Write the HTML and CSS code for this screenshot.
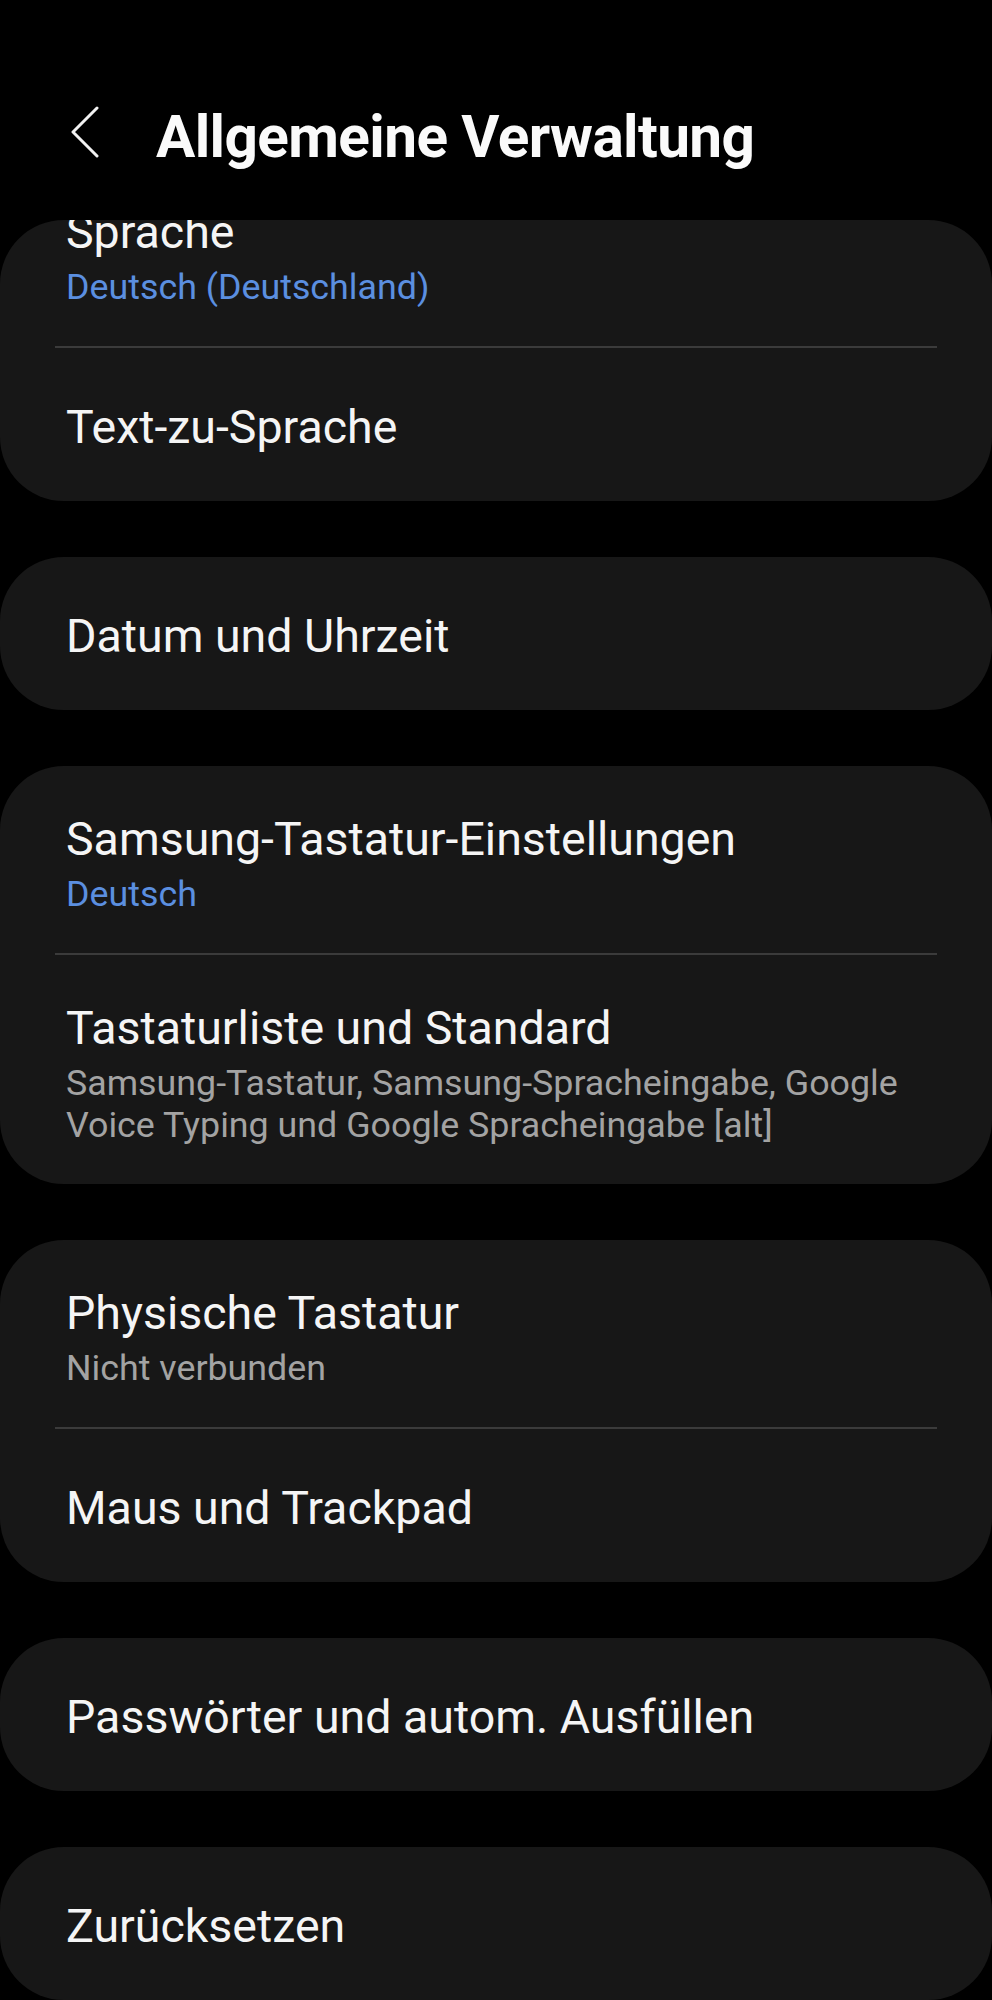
FILE: index.html
```html
<!DOCTYPE html>
<html lang="de">
<head>
<meta charset="utf-8">
<title>Allgemeine Verwaltung</title>
<link rel="stylesheet" href="styles.css">
</head>
<body>
<header class="appbar">
  <svg class="back" width="30" height="52" viewBox="0 0 30 52" aria-hidden="true">
    <path d="M27 2 L3 26 L27 50" fill="none" stroke="#f2f2f2" stroke-width="3" stroke-linecap="round" stroke-linejoin="round"/>
  </svg>
  <h1 class="title">Allgemeine Verwaltung</h1>
</header>
<main class="list">
  <section class="card">
    <div class="row two scrolled">
      <div class="row-title">Sprache</div>
      <div class="row-sub blue">Deutsch (Deutschland)</div>
    </div>
    <div class="divider"></div>
    <div class="row one">
      <div class="row-title">Text-zu-Sprache</div>
    </div>
  </section>
  <section class="card">
    <div class="row one">
      <div class="row-title">Datum und Uhrzeit</div>
    </div>
  </section>
  <section class="card">
    <div class="row two">
      <div class="row-title">Samsung-Tastatur-Einstellungen</div>
      <div class="row-sub blue">Deutsch</div>
    </div>
    <div class="divider"></div>
    <div class="row two">
      <div class="row-title">Tastaturliste und Standard</div>
      <div class="row-sub gray">Samsung-Tastatur, Samsung-Spracheingabe, Google Voice Typing und Google Spracheingabe [alt]</div>
    </div>
  </section>
  <section class="card">
    <div class="row two">
      <div class="row-title">Physische Tastatur</div>
      <div class="row-sub gray">Nicht verbunden</div>
    </div>
    <div class="divider"></div>
    <div class="row one">
      <div class="row-title">Maus und Trackpad</div>
    </div>
  </section>
  <section class="card">
    <div class="row one">
      <div class="row-title">Passwörter und autom. Ausfüllen</div>
    </div>
  </section>
  <section class="card">
    <div class="row one">
      <div class="row-title">Zurücksetzen</div>
    </div>
  </section>
</main>
</body>
</html>
```
FILE: styles.css
```css
html, body {
  margin: 0;
  padding: 0;
  background: #000;
}
body {
  width: 992px;
  height: 2000px;
  overflow: hidden;
  font-family: Roboto, "Noto Sans", "Liberation Sans", sans-serif;
  color: #f5f5f5;
}
.appbar {
  height: 220px;
  box-sizing: border-box;
  display: flex;
  align-items: flex-start;
  padding: 106px 0 0 70px;
  gap: 56px;
}
.back {
  display: block;
  flex: none;
}
.title {
  margin: 0;
  margin-top: -4px;
  font-size: 58.5px;
  line-height: 70px;
  font-weight: 700;
  letter-spacing: -0.6px;
  color: #fafafa;
}
.list {
  display: flex;
  flex-direction: column;
  gap: 56px;
}
.card {
  background: #171717;
  border-radius: 64px;
  overflow: hidden;
}
.row {
  padding-left: 66px;
  padding-right: 50px;
  box-sizing: border-box;
}
.row.one {
  height: 153px;
  padding-top: 53px;
}
.row.two {
  padding-top: 47px;
  padding-bottom: 38px;
}
.row.scrolled {
  margin-top: -61px;
}
.row-title {
  font-size: 46.5px;
  line-height: 52px;
  color: #f5f5f5;
}
.row-sub {
  margin-top: 8px;
  font-size: 35.8px;
  line-height: 42px;
}
.blue { color: #5b8fe0; }
.gray { color: #a3a3a3; }
.divider {
  height: 2px;
  margin: 0 55px;
  background: #3b3b3b;
}
```
